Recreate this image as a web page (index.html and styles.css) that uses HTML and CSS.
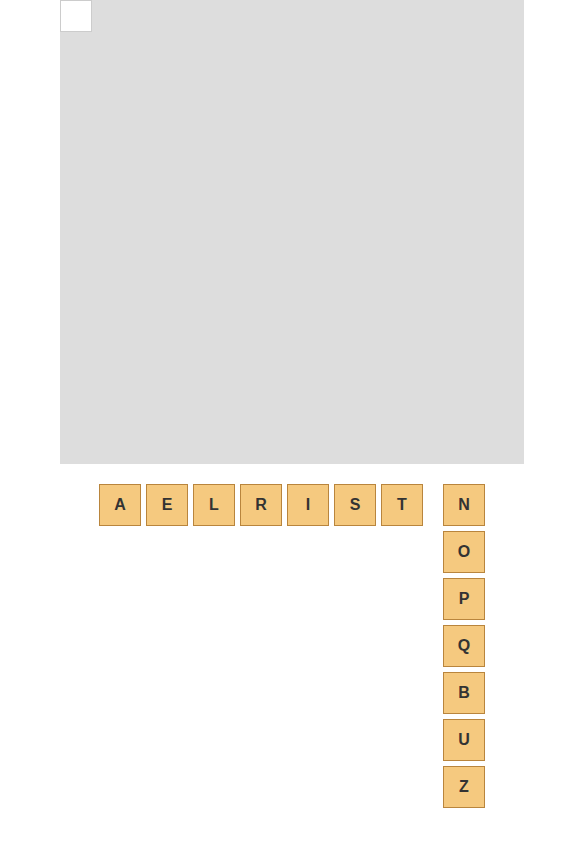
FILE: index.html
```html
<!DOCTYPE html>
<html>
<head>
<meta charset="utf-8">
<link rel="stylesheet" href="styles.css">
</head>
<body>
<div class="board">
  <div class="cell"></div>
</div>
<div class="rack">
  <div class="row">
    <div class="tile">A</div>
    <div class="tile">E</div>
    <div class="tile">L</div>
    <div class="tile">R</div>
    <div class="tile">I</div>
    <div class="tile">S</div>
    <div class="tile">T</div>
  </div>
  <div class="column">
    <div class="tile">N</div>
    <div class="tile">O</div>
    <div class="tile">P</div>
    <div class="tile">Q</div>
    <div class="tile">B</div>
    <div class="tile">U</div>
    <div class="tile">Z</div>
  </div>
</div>
</body>
</html>
```

FILE: styles.css
```css
html, body {
  margin: 0;
  padding: 0;
  background: #ffffff;
  font-family: "Liberation Sans", Arial, sans-serif;
}

.board {
  width: 464px;
  height: 464px;
  margin: 0 auto;
  background: #dddddd;
}

.cell {
  width: 30px;
  height: 30px;
  background: #ffffff;
  border: 1px solid #cccccc;
}

.rack {
  display: flex;
  justify-content: center;
  align-items: flex-start;
  gap: 20px;
  margin-top: 20px;
}

.row {
  display: flex;
  gap: 5px;
}

.column {
  display: flex;
  flex-direction: column;
  gap: 5px;
}

.tile {
  width: 40px;
  height: 40px;
  box-sizing: content-box;
  border: 1px solid #b9853d;
  background: #f5c97f;
  color: #333333;
  font-weight: bold;
  font-size: 16px;
  display: flex;
  align-items: center;
  justify-content: center;
}
```
